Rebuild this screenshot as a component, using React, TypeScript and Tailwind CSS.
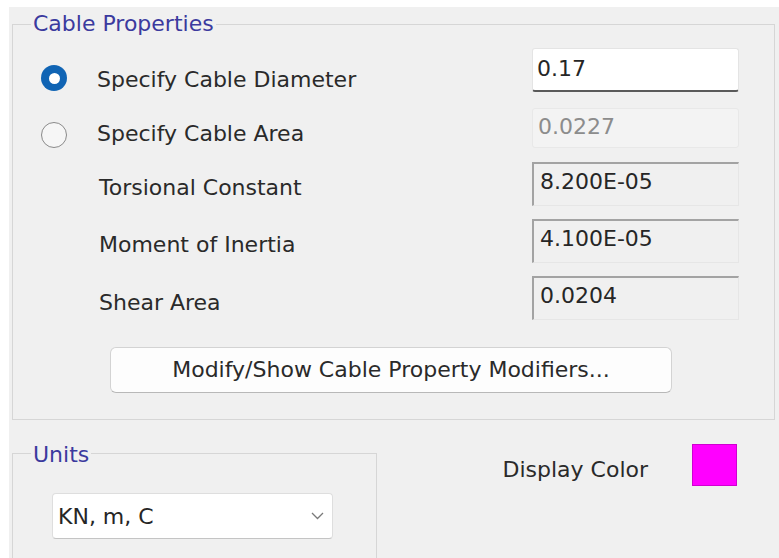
const font = { fontFamily: '"DejaVu Sans", "Liberation Sans", sans-serif' };

const Radio: React.FC<{ checked?: boolean }> = ({ checked }) =>
  checked ? (
    <span className="flex h-[26px] w-[26px] shrink-0 items-center justify-center rounded-full bg-[#1064b4]">
      <span className="block h-[11px] w-[11px] rounded-full bg-white" />
    </span>
  ) : (
    <span className="block h-[26px] w-[26px] shrink-0 rounded-full border-[1.5px] border-[#8a8a8a] bg-[#f6f6f6]" />
  );

const ReadOnlyBox: React.FC<{ value: string }> = ({ value }) => (
  <div className="h-[44px] w-[207px] border-t-2 border-l-2 border-r border-b border-t-[#a3a3a3] border-l-[#a3a3a3] border-r-[#e6e6e6] border-b-[#e6e6e6] bg-[#f0f0f0] pl-[6px] pt-[5px] text-[#262626]">
    {value}
  </div>
);

export default function App() {
  return (
    <div className="flex h-[558px] w-[779px] flex-col overflow-hidden bg-white text-[22px] leading-[26px]" style={font}>
      <div className="ml-[9px] mt-[7px] flex flex-1 flex-col bg-[#f0f0f0]">
        {/* Cable Properties group */}
        <fieldset className="ml-[3px] mt-[4px] w-[763px] border border-[#d6d6d6] pb-[26px]">
          <legend className="ml-[18px] px-[2px] text-[#3b3a9e]">Cable Properties</legend>

          <div className="mt-[11px] flex flex-col gap-[13px] pr-[35px]">
            <div className="flex h-[44px] items-start">
              <div className="ml-[28px] mt-[17px] w-[26px]">
                <Radio checked />
              </div>
              <div className="ml-[30px] mt-[19px] flex-1 text-[#2a2a2a]">Specify Cable Diameter</div>
              <div className="h-[44px] w-[207px] rounded-[3px] border border-[#e4e4e4] border-b-2 border-b-[#5a5a5a] bg-white pl-[4px] pt-[7px] text-[#262626]">
                0.17
              </div>
            </div>

            <div className="flex h-[44px] items-center">
              <div className="ml-[28px] mt-[16px] w-[26px]">
                <Radio />
              </div>
              <div className="ml-[30px] mt-[14px] flex-1 text-[#2a2a2a]">Specify Cable Area</div>
              <div className="mt-[2px] h-[40px] w-[207px] rounded-[3px] border border-[#e8e8e8] bg-[#f3f3f3] pl-[5px] pt-[5px] text-[#8c8c8c]">
                0.0227
              </div>
            </div>

            <div className="flex h-[44px] items-center">
              <div className="ml-[86px] mt-[7px] flex-1 text-[#2a2a2a]">Torsional Constant</div>
              <ReadOnlyBox value="8.200E-05" />
            </div>

            <div className="flex h-[44px] items-center">
              <div className="ml-[86px] mt-[7px] flex-1 text-[#2a2a2a]">Moment of Inertia</div>
              <ReadOnlyBox value="4.100E-05" />
            </div>

            <div className="flex h-[44px] items-center">
              <div className="ml-[86px] mt-[9px] flex-1 text-[#2a2a2a]">Shear Area</div>
              <ReadOnlyBox value="0.0204" />
            </div>
          </div>

          <div className="mt-[27px] flex">
            <button className="ml-[97px] h-[46px] w-[562px] rounded-[6px] border border-[#d3d3d3] border-b-[#b8b8b8] bg-[#fdfdfd] text-[#2a2a2a]">
              Modify/Show Cable Property Modifiers...
            </button>
          </div>
        </fieldset>

        {/* Units + display color */}
        <div className="mt-[19px] flex">
          <fieldset className="ml-[3px] h-[140px] w-[365px] border border-[#d6d6d6]">
            <legend className="ml-[18px] px-[2px] pt-[3px] text-[#3b3a9e]">Units</legend>
            <div className="ml-[39px] mt-[25px] flex h-[46px] w-[281px] items-center justify-between rounded-[4px] border border-[#dedede] border-b-[#c4c4c4] bg-white pl-[5px] pr-[8px] text-[#262626]">
              <span className="mt-[2px]">KN, m, C</span>
              <svg width="13" height="8" viewBox="0 0 13 8" fill="none">
                <polyline points="1,1 6.5,6.5 12,1" stroke="#7a7a7a" strokeWidth="1.3" />
              </svg>
            </div>
          </fieldset>

          <div className="flex flex-1 items-start justify-end pr-[42px] pt-[5px]">
            <span className="mt-[13px] text-[#2a2a2a]">Display Color</span>
            <span className="ml-[44px] block h-[42px] w-[45px] border border-[#d000d0] bg-[#ff00ff]" />
          </div>
        </div>
      </div>
    </div>
  );
}
